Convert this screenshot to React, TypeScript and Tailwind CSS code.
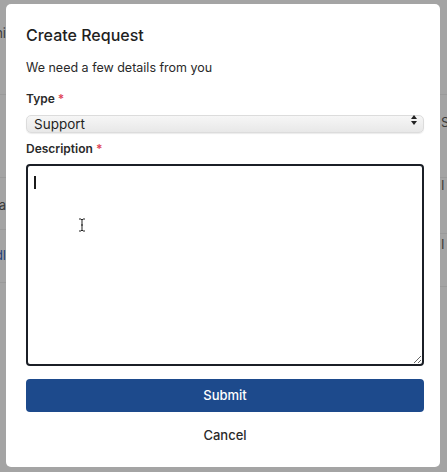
import { useState } from 'react';

type Row = { h: number; text?: string; pt?: number; color?: string };

function SideStrip({ side, rows }: { side: 'left' | 'right'; rows: Row[] }) {
  // bits of the dimmed page behind the modal
  return (
    <div className={`flex flex-col overflow-hidden ${side === 'left' ? 'w-[6px]' : 'w-[7px]'}`}>
      {rows.map((r, i) => (
        <div
          key={i}
          className={`flex shrink-0 flex-col border-b border-[#9a9a9a] ${side === 'left' ? 'items-end' : 'items-start pl-[1px]'}`}
          style={{ height: r.h, paddingTop: r.pt ?? 0 }}
        >
          {r.text && (
            <span className={`whitespace-nowrap text-[13px] leading-[14px] ${r.color ?? 'text-[#3a3a3a]'}`}>{r.text}</span>
          )}
        </div>
      ))}
    </div>
  );
}

export default function App() {
  const [type, setType] = useState('Support');
  const [desc, setDesc] = useState('');

  return (
    <div
      className="flex h-[472px] w-[447px] overflow-hidden bg-[#a4a4a4] pt-[4px] pb-[5px]"
      style={{ fontFamily: 'Inter, "Noto Sans", sans-serif' }}
    >
      <SideStrip
        side="left"
        rows={[
          { h: 91, text: 'hi', pt: 22 },
          { h: 83 },
          { h: 52, text: 'a', pt: 20 },
          { h: 53, text: 'dl', pt: 18, color: 'text-[#1f3f7a]' },
        ]}
      />
      <div className="flex flex-1 flex-col rounded-[5px] bg-white pl-[20px] pr-[16px] pt-[21px] text-[#1f1f1f]">
        <h1 className="text-[16px] font-medium leading-[20px]">Create Request</h1>
        <p className="mt-[15px] text-[12.5px] leading-[16px] text-[#2a2a2a]">We need a few details from you</p>

        <label className="mt-[15px] text-[12px] font-semibold leading-[16px] text-[#2a2a2a]">
          Type <span className="text-[#e0455a]">*</span>
        </label>
        <div className="relative mt-[4px] h-[18px]">
          <select
            value={type}
            onChange={(e) => setType(e.target.value)}
            className="h-[18px] w-full appearance-none rounded-[5px] border border-[#dcdcdc] bg-gradient-to-b from-[#f6f6f6] to-[#e8e8e8] pl-[7px] text-[13.5px] leading-[16px] text-[#1f1f1f] shadow-[0_1px_1px_rgba(0,0,0,0.08)] outline-none"
          >
            <option>Support</option>
            <option>Feature</option>
            <option>Bug</option>
          </select>
          <svg className="pointer-events-none absolute right-[7px] top-[4px]" width="6" height="10" viewBox="0 0 6 10">
            <path d="M3 0 L6 4 H0 Z" fill="#222" />
            <path d="M3 10 L6 6 H0 Z" fill="#222" />
          </svg>
        </div>

        <label className="mt-[12px] text-[12px] font-semibold leading-[16px] text-[#2a2a2a]">
          Description <span className="text-[#e0455a]">*</span>
        </label>
        <div className="relative mt-[7px]">
          <textarea
            value={desc}
            onChange={(e) => setDesc(e.target.value)}
            className="block h-[202px] w-full resize-y rounded-[4px] border-2 border-[#1b1f26] px-[6px] py-[6px] text-[13px] outline-none"
          />
          <span className="pointer-events-none absolute left-[8px] top-[12px] h-[13px] w-[2px] bg-[#1b1b1b]" />
          <svg className="pointer-events-none absolute left-[52px] top-[54px]" width="8" height="14" viewBox="0 0 8 14">
            <path d="M1 1 H3 L4 2 L5 1 H7 M4 2 V12 M1 13 H3 L4 12 L5 13 H7" stroke="#222" strokeWidth="1" fill="none" />
            <path d="M3 7 H5" stroke="#222" strokeWidth="1" />
          </svg>
        </div>

        <button className="mt-[13px] h-[33px] w-full rounded-[4px] bg-[#1d4a8c] text-[13px] font-medium text-white">
          Submit
        </button>
        <button className="mt-[9px] h-[30px] w-full text-[13px] font-medium text-[#2a2a2a]">Cancel</button>
      </div>
      <SideStrip
        side="right"
        rows={[
          { h: 91 },
          { h: 83, text: 'S', pt: 20 },
          { h: 56, text: 'I', pt: 0 },
          { h: 53, text: 'I', pt: 3 },
        ]}
      />
    </div>
  );
}
